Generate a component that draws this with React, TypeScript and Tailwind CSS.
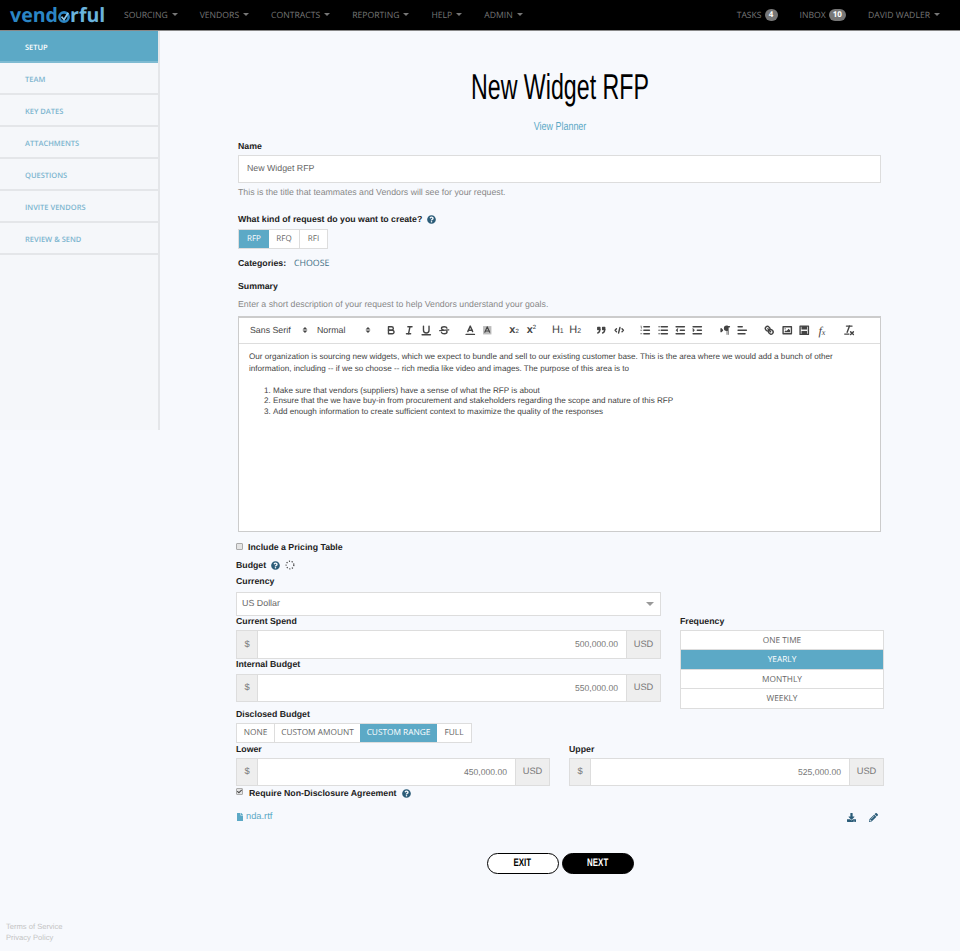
import React from "react";
import { FaDownload, FaFile, FaPencilAlt, FaQuestionCircle, FaCheck } from "react-icons/fa";

const navItems = ["SOURCING", "VENDORS", "CONTRACTS", "REPORTING", "HELP", "ADMIN"];
const sideItems = ["SETUP", "TEAM", "KEY DATES", "ATTACHMENTS", "QUESTIONS", "INVITE VENDORS", "REVIEW & SEND"];

function Caret() {
  return <span className="inline-block ml-[4px] align-middle border-x-[3px] border-t-[3px] border-x-transparent border-t-[#777]" />;
}

function Help() {
  return <FaQuestionCircle className="inline-block text-[9px] text-[#2b5c78]" />;
}

function Label({ children, className = "" }: { children: React.ReactNode; className?: string }) {
  return <div className={`text-[8.75px] leading-[12px] font-bold text-[#222] ${className}`}>{children}</div>;
}

function MoneyInput({ value, h = "h-[29px]" }: { value: string; h?: string }) {
  return (
    <div className={`flex ${h} border border-[#ddd] text-[9.3px] text-[#777]`}>
      <div className="w-[21px] shrink-0 bg-[#eee] border-r border-[#ddd] flex items-center justify-center">$</div>
      <div className="flex-1 bg-white flex items-center justify-end pr-[8px] text-[8.6px]">{value}</div>
      <div className="w-[34px] shrink-0 bg-[#eee] border-l border-[#ddd] flex items-center justify-center">USD</div>
    </div>
  );
}

function Q({ children, w = "w-[17.4px]" }: { children: React.ReactNode; w?: string }) {
  return (
    <span className={`${w} h-[14px] flex items-center justify-center shrink-0`}>
      <svg viewBox="0 0 18 18" className="w-[12.5px] h-[12.5px] fill-none stroke-[#444] stroke-2 [stroke-linecap:round] [stroke-linejoin:round]">
        {children}
      </svg>
    </span>
  );
}

function QText({ children, className = "" }: { children: React.ReactNode; className?: string }) {
  return <span className={`w-[17.4px] h-[14px] flex items-center justify-center shrink-0 text-[#444] ${className}`}>{children}</span>;
}

function Toolbar() {
  return (
    <div className="h-[26px] border-b border-[#ddd] flex items-center pl-[11px] text-[8.8px] text-[#444]">
      <span className="w-[67px] flex justify-between pr-[7px]">Sans Serif <Updown /></span>
      <span className="w-[66px] flex justify-between pr-[10px]">Normal <Updown /></span>
      <Q><path d="M5,4H9.5A2.5,2.5,0,0,1,12,6.5v0A2.5,2.5,0,0,1,9.5,9H5V4Z" /><path d="M5,9h5.5A2.5,2.5,0,0,1,13,11.5v0A2.5,2.5,0,0,1,10.5,14H5V9Z" /></Q>
      <Q><line x1="7" x2="13" y1="4" y2="4" /><line x1="5" x2="11" y1="14" y2="14" /><line x1="8" x2="10" y1="14" y2="4" /></Q>
      <Q><path d="M5,3V9a4,4,0,0,0,4,4H9a4,4,0,0,0,4-4V3" /><line x1="3" x2="15" y1="15.5" y2="15.5" /></Q>
      <Q><line x1="15.5" x2="2.5" y1="8.5" y2="9.5" /><path d="M12.9,6C12.4,4.2,10.8,4,9,4,6.8,4,5,5,5,6.5S6,8.3,7.5,8.7" /><path d="M5,12C5.5,13.8,7.2,14,9,14c2.2,0,4-1,4-2.5a2.3,2.3,0,0,0-.5-1.5" /></Q>
      <span className="w-[9px] shrink-0" />
      <Q><line x1="3" x2="15" y1="15" y2="15" /><polyline points="5.5 11 9 3 12.5 11" /><line x1="11.63" x2="6.38" y1="9" y2="9" /></Q>
      <Q>
        <rect x="3" y="3" width="12" height="12" className="fill-[#bbb] stroke-none" />
        <polyline points="5.5 12 9 4 12.5 12" className="stroke-[1.5]" />
        <line x1="11.6" x2="6.4" y1="10" y2="10" className="stroke-[1.5]" />
      </Q>
      <span className="w-[9px] shrink-0" />
      <QText className="font-bold text-[11px]">x<sub className="text-[6px] font-normal">2</sub></QText>
      <QText className="font-bold text-[11px]">x<sup className="text-[6px] font-normal">2</sup></QText>
      <span className="w-[9px] shrink-0" />
      <QText className="text-[11px]">H<sub className="text-[7px]">1</sub></QText>
      <QText className="text-[11px]">H<sub className="text-[7px]">2</sub></QText>
      <span className="w-[9px] shrink-0" />
      <Q><rect x="4" y="5" width="3" height="3" className="fill-[#444]" /><rect x="11" y="5" width="3" height="3" className="fill-[#444]" /><path d="M7,8c0,4-3,5-3,5" /><path d="M14,8c0,4-3,5-3,5" /></Q>
      <Q><polyline points="5 7 3 9 5 11" /><polyline points="13 7 15 9 13 11" /><line x1="10" x2="8" y1="5" y2="13" /></Q>
      <span className="w-[9px] shrink-0" />
      <Q><line x1="7" x2="15" y1="4" y2="4" /><line x1="7" x2="15" y1="9" y2="9" /><line x1="7" x2="15" y1="14" y2="14" /><line x1="3" x2="3.5" y1="3" y2="6" className="stroke-1" /><line x1="2.5" x2="4" y1="9" y2="9" className="stroke-1" /><line x1="2.5" x2="4" y1="14" y2="14" className="stroke-1" /></Q>
      <Q><line x1="6" x2="15" y1="4" y2="4" /><line x1="6" x2="15" y1="9" y2="9" /><line x1="6" x2="15" y1="14" y2="14" /><line x1="3" x2="3" y1="4" y2="4" /><line x1="3" x2="3" y1="9" y2="9" /><line x1="3" x2="3" y1="14" y2="14" /></Q>
      <Q><line x1="3" x2="15" y1="14" y2="14" /><line x1="3" x2="15" y1="4" y2="4" /><line x1="9" x2="15" y1="9" y2="9" /><polyline points="5 7 5 11 3 9 5 7" className="fill-[#444] stroke-1" /></Q>
      <Q><line x1="3" x2="15" y1="14" y2="14" /><line x1="3" x2="15" y1="4" y2="4" /><line x1="9" x2="15" y1="9" y2="9" /><polyline points="3 7 3 11 5 9 3 7" className="fill-[#444] stroke-1" /></Q>
      <span className="w-[10px] shrink-0" />
      <Q><polygon points="3 11 5 9 3 7" className="fill-[#444]" /><line x1="15" x2="11" y1="4" y2="4" /><path d="M11,3a3,3,0,0,0,0,6h1V3H11Z" className="fill-[#444]" /><line x1="11.5" x2="11.5" y1="4" y2="15" className="stroke-1" /><line x1="13.5" x2="13.5" y1="4" y2="15" className="stroke-1" /></Q>
      <Q><line x1="3" x2="15" y1="9" y2="9" /><line x1="3" x2="13" y1="14" y2="14" /><line x1="3" x2="9" y1="4" y2="4" /></Q>
      <span className="w-[10px] shrink-0" />
      <Q><line x1="7" x2="11" y1="7" y2="11" /><path d="M8.9,4.577a3.476,3.476,0,0,1,.36,4.679A3.476,3.476,0,0,1,4.577,8.9C3.185,7.5,2.035,6.4,4.217,4.217S7.5,3.185,8.9,4.577Z" /><path d="M13.423,9.1a3.476,3.476,0,0,0-4.679-.36,3.476,3.476,0,0,0,.36,4.679c1.392,1.392,2.5,2.542,4.679.36S14.815,10.5,13.423,9.1Z" /></Q>
      <Q><rect x="3" y="4" width="12" height="10" /><circle cx="6" cy="7" r="1" className="fill-[#444] stroke-none" /><polyline points="5 12 5 11 7 9 8 10 11 7 13 9 13 12 5 12" className="fill-[#444] stroke-none" /></Q>
      <Q><rect x="3" y="3" width="12" height="12" /><rect x="5" y="3" width="8" height="5" className="fill-[#444] stroke-none" /><rect x="5" y="10" width="8" height="5" className="fill-[#444] stroke-none" /></Q>
      <QText className="font-['Liberation_Serif',serif] italic text-[12px]">f<sub className="text-[8px]">x</sub></QText>
      <span className="w-[10px] shrink-0" />
      <Q><line x1="5" x2="13" y1="3" y2="3" /><line x1="6" x2="9.35" y1="12" y2="3" /><line x1="11" x2="15" y1="11" y2="15" /><line x1="15" x2="11" y1="11" y2="15" /><line x1="2.5" x2="8.5" y1="14.5" y2="14.5" /></Q>
    </div>
  );
}

function Updown() {
  return (
    <svg viewBox="0 0 18 18" className="w-[10px] h-[12px] fill-none stroke-[#444] stroke-2">
      <polygon points="7 11 9 13 11 11" />
      <polygon points="7 7 9 5 11 7" />
    </svg>
  );
}

function Spinner() {
  return (
    <svg viewBox="0 0 12 12" className="inline-block w-[10px] h-[10px] fill-none stroke-[#444] stroke-[1.5] [stroke-dasharray:1.4_1.9]">
      <circle cx="6" cy="6" r="4.6" />
    </svg>
  );
}

export default function App() {
  return (
    <div className="min-h-[951px] bg-[#f7f9fd] font-['Liberation_Sans',sans-serif] [text-rendering:geometricPrecision] flex flex-col">
      <nav className="h-[31px] shrink-0 bg-black border-b border-[#888] flex items-center font-['Open_Sans',sans-serif] text-[8.65px] text-[#777]">
        <div className="w-[124px] pl-[10px] font-bold text-[19.6px] leading-[30px] text-[#2b86c5] flex items-center">
          vend
          <svg viewBox="0 0 14 14" className="w-[12px] h-[12px] mt-[3px]">
            <circle cx="7" cy="7" r="5.4" fill="none" stroke="#2b86c5" strokeWidth="3" />
            <path d="M4 6.5 L7 10 L12 2" fill="none" stroke="#8cc6e8" strokeWidth="2" />
          </svg>
          <span className="text-[#6ab3dc]">rful</span>
        </div>
        <div className="flex gap-[22px]">
          {navItems.map((item) => (
            <span key={item} className="flex items-center">{item}<Caret /></span>
          ))}
        </div>
        <div className="ml-auto flex items-center gap-[22px] pr-[20px]">
          <span className="flex items-center gap-[3px]">
            TASKS
            <span className="h-[12px] min-w-[13px] px-[3px] rounded-full bg-[#777] text-white font-bold text-[8px] flex items-center justify-center">4</span>
          </span>
          <span className="flex items-center gap-[3px]">
            INBOX
            <span className="h-[12px] min-w-[13px] px-[4px] rounded-full bg-[#777] text-white font-bold text-[8px] flex items-center justify-center">10</span>
          </span>
          <span className="flex items-center">DAVID WADLER<Caret /></span>
        </div>
      </nav>

      <div className="flex flex-1">
        <div className="w-[160px] shrink-0 flex flex-col">
          <aside className="h-[399px] bg-[#f5f7fa] border-r-2 border-[#e4e6e9]">
            {sideItems.map((item, idx) => (
              <div
                key={item}
                className={`h-[32px] pl-[25px] pt-[5px] flex items-center border-b-2 font-['Open_Sans',sans-serif] font-semibold text-[7.5px] ${
                  idx === 0 ? "bg-[#5ca9c6] border-[#7fbbd2] text-white" : "border-[#e4e6e9] text-[#7cb5cf]"
                }`}
              >
                {item}
              </div>
            ))}
          </aside>
          <div className="mt-auto pl-[6px] pb-[8px] text-[7.6px] leading-[11px] text-[#c4c4c4]">
            <div>Terms of Service</div>
            <div>Privacy Policy</div>
          </div>
        </div>

        <main className="flex-1 px-[76px]">
          <h1 className="mt-[36px] text-center scale-x-[0.645] text-[36px] leading-[40px] text-black">
            New Widget RFP
          </h1>
          <div className="mt-[13px] text-center scale-x-[0.78] text-[11.5px] leading-[14px] text-[#5ca9c6]">
            View Planner
          </div>

          <div className="mx-[2px] mr-[3px]">
            <Label className="mt-[6px]">Name</Label>
            <div className="mt-[3px] h-[28px] border border-[#ddd] bg-white flex items-center pl-[8px] text-[8.8px] text-[#666]">New Widget RFP</div>
            <div className="mt-[3px] text-[8.75px] leading-[12px] text-[#888]">This is the title that teammates and Vendors will see for your request.</div>

            <Label className="mt-[15px] flex items-center gap-[5px]">What kind of request do you want to create? <Help /></Label>
            <div className="mt-[4px] flex w-fit border border-[#ddd] bg-white h-[20px] text-[8px] font-['Open_Sans',sans-serif] text-[#666]">
              <span className="w-[30px] bg-[#5ca9c6] text-white flex items-center justify-center">RFP</span>
              <span className="w-[31px] border-r border-[#ddd] flex items-center justify-center">RFQ</span>
              <span className="w-[27px] flex items-center justify-center">RFI</span>
            </div>
            <div className="mt-[8px] flex items-center h-[12px]">
              <Label className="w-[56px]">Categories:</Label>
              <span className="mt-[1px] font-['Open_Sans',sans-serif] text-[8.8px] text-[#3f6f85]">CHOOSE</span>
            </div>
            <Label className="mt-[11px]">Summary</Label>
            <div className="mt-[6px] text-[8.75px] leading-[12px] text-[#888]">Enter a short description of your request to help Vendors understand your goals.</div>

            <div className="mt-[6px] h-[216px] border border-[#ccc] border-t-2 bg-white">
              <Toolbar />
              <div className="px-[10px] pt-[7px] text-[8.15px] leading-[12px] text-[#444]">
                <p>Our organization is sourcing new widgets, which we expect to bundle and sell to our existing customer base. This is the area where we would add a bunch of other information, including -- if we so choose -- rich media like video and images. The purpose of this area is to</p>
                <ol className="mt-[10.5px] pl-[15px] list-decimal list-inside leading-[10.8px]">
                  <li>Make sure that vendors (suppliers) have a sense of what the RFP is about</li>
                  <li>Ensure that the we have buy-in from procurement and stakeholders regarding the scope and nature of this RFP</li>
                  <li>Add enough information to create sufficient context to maximize the quality of the responses</li>
                </ol>
              </div>
            </div>
          </div>

          <div className="mt-[9px] flex items-center h-[12px]">
            <span className="w-[7px] h-[7px] border border-[#aaa] bg-[#e4e4e4] rounded-[1px] -mt-[2px]" />
            <Label className="ml-[5px]">Include a Pricing Table</Label>
          </div>
          <Label className="mt-[6px] flex items-center gap-[5px]">Budget <Help /> <Spinner /></Label>
          <div className="flex gap-[19px]">
            <div className="w-[425px]">
              <Label className="mt-[4px]">Currency</Label>
              <div className="mt-[5px] h-[24px] border border-[#ddd] bg-white flex items-center justify-between pl-[5px] pr-[6px] text-[8.9px] text-[#666]">
                US Dollar
                <span className="border-x-[4px] border-t-[4px] border-x-transparent border-t-[#999]" />
              </div>
              <Label className="-mt-[1px] mb-[3px]">Current Spend</Label>
              <MoneyInput value="500,000.00" />
              <Label className="-mt-[1px] mb-[4px]">Internal Budget</Label>
              <MoneyInput value="550,000.00" h="h-[28px]" />
            </div>
            <div className="w-[204px] pt-[44px]">
              <Label className="mb-[3px]">Frequency</Label>
              <div className="border border-[#ddd] bg-white text-[8.3px] font-['Open_Sans',sans-serif] text-[#666]">
                <div className="h-[19px] pt-[2px] flex items-center justify-center border-b border-[#ddd]">ONE TIME</div>
                <div className="h-[20px] pt-[2px] flex items-center justify-center bg-[#5ca9c6] text-white border-b border-[#ddd]">YEARLY</div>
                <div className="h-[19px] pt-[2px] flex items-center justify-center border-b border-[#ddd]">MONTHLY</div>
                <div className="h-[19px] pt-[2px] flex items-center justify-center">WEEKLY</div>
              </div>
            </div>
          </div>

          <Label className="-mt-[1px]">Disclosed Budget</Label>
          <div className="mt-[3px] flex w-fit h-[20px] border border-[#ddd] bg-white text-[8.3px] font-['Open_Sans',sans-serif] text-[#666]">
            <span className="w-[38px] pt-[1px] border-r border-[#ddd] flex items-center justify-center">NONE</span>
            <span className="w-[85px] pt-[1px] flex items-center justify-center">CUSTOM AMOUNT</span>
            <span className="w-[77px] pt-[1px] bg-[#5ca9c6] text-white flex items-center justify-center">CUSTOM RANGE</span>
            <span className="w-[34px] pt-[1px] flex items-center justify-center">FULL</span>
          </div>
          <div className="flex gap-[19px]">
            <div className="w-[314px]">
              <Label className="mb-[3px]">Lower</Label>
              <MoneyInput value="450,000.00" h="h-[28px]" />
            </div>
            <div className="flex-1">
              <Label className="mb-[3px]">Upper</Label>
              <MoneyInput value="525,000.00" h="h-[28px]" />
            </div>
          </div>

          <div className="flex items-center h-[14px]">
            <span className="w-[7px] h-[7px] border border-[#aaa] bg-[#e4e4e4] rounded-[1px] -mt-[3px] flex items-center justify-center">
              <FaCheck className="text-[5px] text-[#444]" />
            </span>
            <Label className="ml-[6px] flex items-center gap-[5px]">Require Non-Disclosure Agreement <Help /></Label>
          </div>

          <div className="mt-[11px] flex items-center justify-between h-[12px] pr-[6px]">
            <span className="flex items-center gap-[2px] text-[9.3px] text-[#5ca9c6]"><FaFile className="text-[8px]" />nda.rtf</span>
            <span className="flex items-center gap-[13px] text-[#2b5c78] text-[9px]"><FaDownload /><FaPencilAlt /></span>
          </div>

          <div className="mt-[30px] flex justify-center gap-[3px] font-bold text-[11px]">
            <span className="w-[72px] h-[21px] rounded-full border border-black bg-white text-black flex items-center justify-center"><span className="scale-x-[0.72]">EXIT</span></span>
            <span className="w-[72px] h-[21px] rounded-full border border-black bg-black text-white flex items-center justify-center"><span className="scale-x-[0.72]">NEXT</span></span>
          </div>
        </main>
      </div>
    </div>
  );
}
